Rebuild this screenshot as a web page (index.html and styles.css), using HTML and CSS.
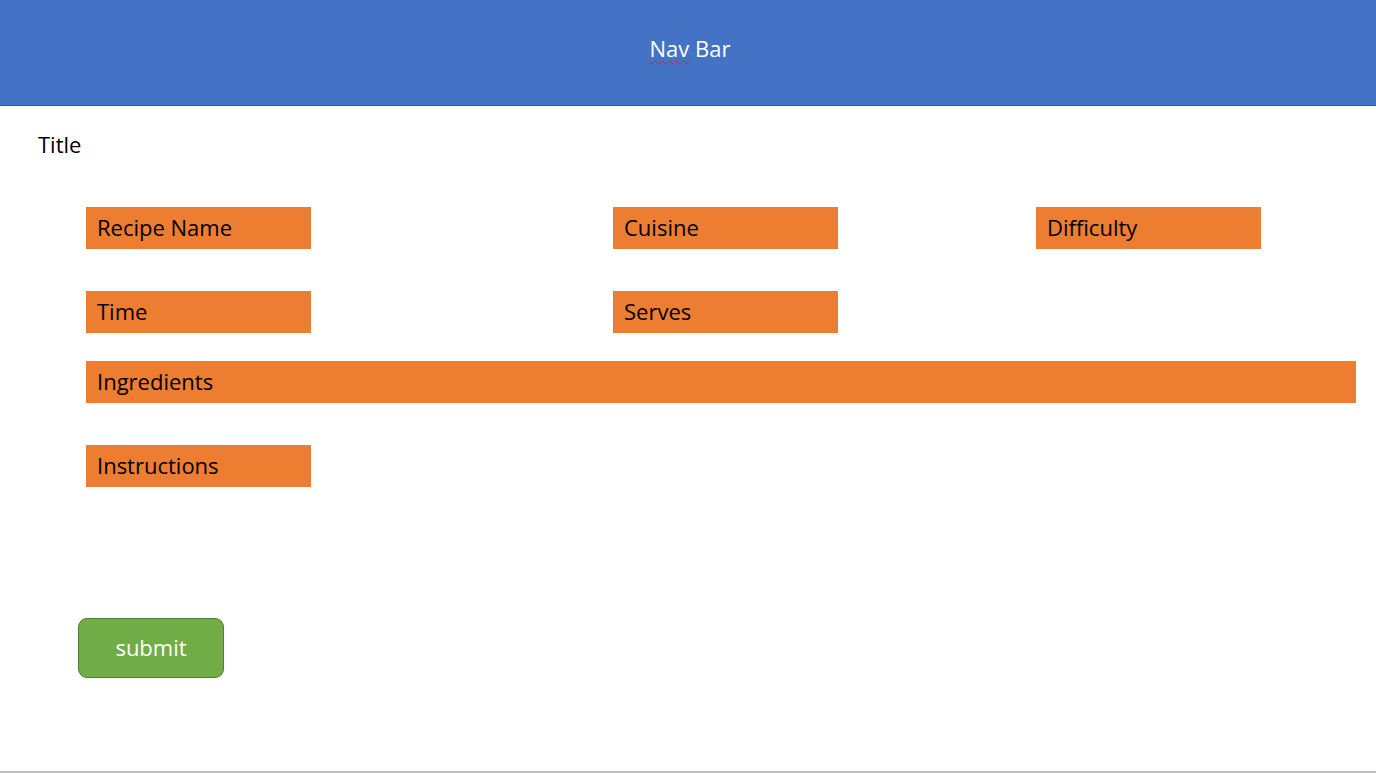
FILE: index.html
```html
<!DOCTYPE html>
<html>
<head>
<meta charset="utf-8">
<link rel="stylesheet" href="styles.css">
</head>
<body>
<header class="nav">
  <span class="nav-text"><span class="squiggle">Nav</span> Bar</span>
</header>
<main class="content">
  <h1 class="title">Title</h1>
  <div class="fields">
    <div class="field">Recipe Name</div>
    <div class="field">Cuisine</div>
    <div class="field">Difficulty</div>
    <div class="field row2">Time</div>
    <div class="field row2">Serves</div>
    <div class="field wide">Ingredients</div>
    <div class="field row4">Instructions</div>
  </div>
  <button class="submit">submit</button>
</main>
</body>
</html>
```
FILE: styles.css
```css
html, body {
  margin: 0;
  padding: 0;
  background: #ffffff;
}
body {
  font-family: "Open Sans", "Noto Sans", sans-serif;
  width: 1376px;
  height: 773px;
  box-sizing: border-box;
  border-bottom: 2px solid #bfbfbf;
  overflow: hidden;
}
.nav {
  background: #4472c4;
  border-bottom: 1px solid #2f528f;
  display: flex;
  justify-content: center;
  padding-top: 33px;
  height: 72px;
}
.nav-text {
  color: #ffffff;
  font-size: 22px;
  line-height: 30px;
  padding-left: 4px;
}
.squiggle {
  text-decoration: underline wavy #e02020;
  text-decoration-thickness: 1px;
  text-underline-offset: 3px;
}
.content {
  padding: 0 20px 0 38px;
}
.title {
  margin: 23px 0 0 0;
  font-size: 22px;
  font-weight: normal;
  line-height: 30px;
  color: #000;
}
.fields {
  margin: 48px 0 0 48px;
  display: grid;
  grid-template-columns: 527px 423px 1fr;
  grid-template-rows: 42px 56px 42px 56px;
  row-gap: 28px;
}
.field {
  width: 225px;
  height: 42px;
  background: #ed7d31;
  color: #000;
  font-size: 22px;
  line-height: 40px;
  padding-left: 11px;
  box-sizing: border-box;
}
.row2 {
  grid-row: 2;
  align-self: end;
}
.wide {
  grid-row: 3;
  grid-column: 1 / 4;
  width: auto;
}
.row4 {
  grid-row: 4;
  grid-column: 1;
  align-self: end;
}
.submit {
  display: block;
  margin: 131px 0 0 40px;
  width: 146px;
  height: 60px;
  background: #70ad47;
  border: 1px solid #507e32;
  border-radius: 9px;
  color: #ffffff;
  font-family: "Open Sans", "Noto Sans", sans-serif;
  font-size: 22px;
  padding: 0 0 2px 0;
}
```
